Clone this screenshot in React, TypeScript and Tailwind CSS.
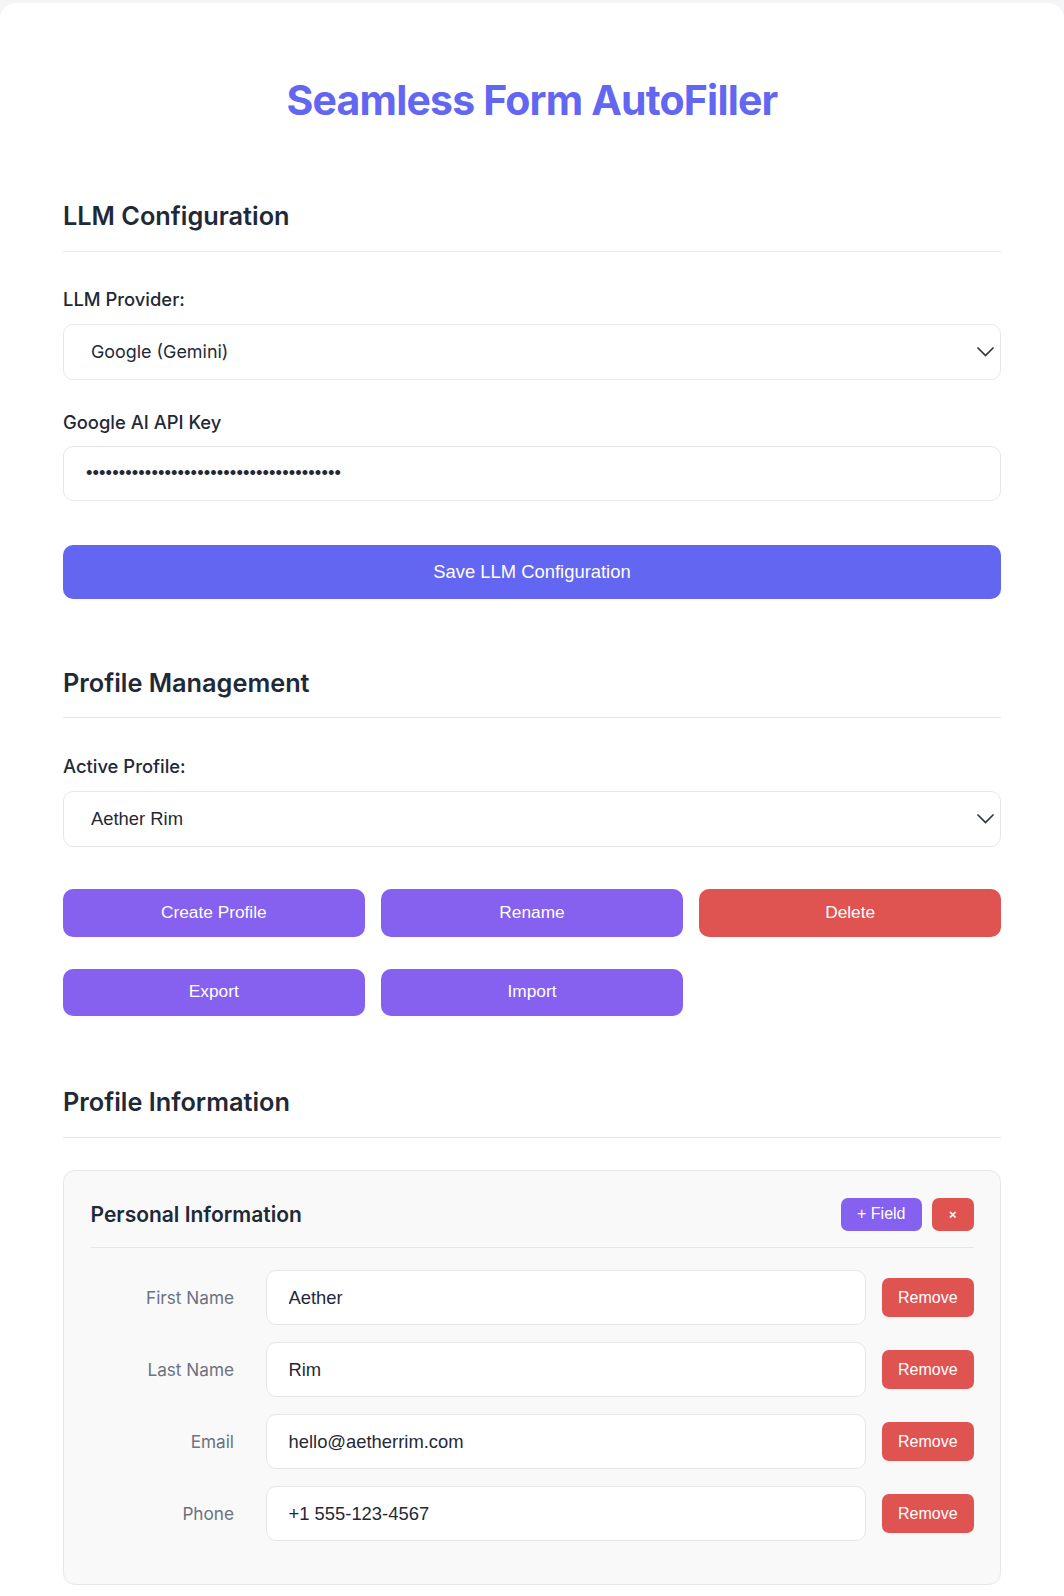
import React from "react";

const ui = "font-['Inter','Noto_Sans',sans-serif]";
const arial = "font-['Liberation_Sans',Arial,sans-serif]";

function SectionTitle({ children, className = "" }: { children: React.ReactNode; className?: string }) {
  return (
    <h2
      className={`${ui} text-[25.3px] leading-[32px] font-semibold text-[#1f2937] pb-[18.5px] border-b border-[#e5e7eb] ${className}`}
    >
      {children}
    </h2>
  );
}

function Label({ children, className = "" }: { children: React.ReactNode; className?: string }) {
  return (
    <label className={`${ui} block text-[18.4px] leading-[28px] font-medium text-[#1f2937] ${className}`}>
      {children}
    </label>
  );
}

function Chevron() {
  return (
    <svg
      className="pointer-events-none absolute right-[7px] top-1/2 -translate-y-1/2"
      width="17"
      height="10"
      viewBox="0 0 17 10"
      fill="none"
    >
      <path d="M1 1L8.5 8.5L16 1" stroke="#2f3542" strokeWidth="1.7" strokeLinecap="round" />
    </svg>
  );
}

function Select({ value, options, font, size }: { value: string; options: string[]; font: string; size: string }) {
  return (
    <div className="relative">
      <select
        defaultValue={value}
        className={`${font} ${size} appearance-none w-full h-[56px] pl-[27px] pr-10 bg-white border border-[#e5e7eb] rounded-[10px] text-[#1f2937] outline-none`}
      >
        {options.map((o) => (
          <option key={o}>{o}</option>
        ))}
      </select>
      <Chevron />
    </div>
  );
}

export default function App() {
  const fields = [
    { label: "First Name", value: "Aether" },
    { label: "Last Name", value: "Rim" },
    { label: "Email", value: "hello@aetherrim.com" },
    { label: "Phone", value: "+1 555-123-4567" },
  ];

  const purpleBtn = `${arial} h-[47.5px] rounded-[10px] bg-[#8660ee] text-white text-[17.3px]`;

  return (
    <div className="bg-[#f5f5f7] pt-[3px]">
      <div className="bg-white rounded-t-[16px] px-[63px] pt-[73px] pb-[9.5px]">
        {/* Header */}
        <h1 className={`${ui} text-center text-[41px] leading-[48px] font-bold text-[#6366f1] tracking-[-0.02em]`}>
          Seamless Form AutoFiller
        </h1>

        {/* LLM configuration */}
        <SectionTitle className="mt-[76px]">LLM Configuration</SectionTitle>
        <Label className="mt-[33.5px] mb-[11px]">LLM Provider:</Label>
        <Select
          value="Google (Gemini)"
          options={["Google (Gemini)", "OpenAI", "Anthropic"]}
          font={ui}
          size="text-[17.9px]"
        />

        <Label className="mt-[28px] mb-[9.5px]">Google AI API Key</Label>
        <input
          type="password"
          readOnly
          value="AIzaSyD3x9kQm2Lp7Vt5Rw8Yb1Nc4Hf6Jg0Zs2u"
          className={`${arial} block w-full h-[55px] pl-[22px] bg-white border border-[#e5e7eb] rounded-[10px] text-[18.4px] tracking-[0.1px] text-[#1f2937] outline-none`}
        />

        <button className={`${arial} mt-[44px] w-full h-[54px] rounded-[10px] bg-[#6366f1] text-white text-[18.4px]`}>
          Save LLM Configuration
        </button>

        {/* Profile management */}
        <SectionTitle className="mt-[68px]">Profile Management</SectionTitle>
        <Label className="mt-[33.5px] mb-[11px]">Active Profile:</Label>
        <Select value="Aether Rim" options={["Aether Rim"]} font={arial} size="text-[18.4px]" />

        <div className="mt-[42.5px] grid grid-cols-3 gap-x-[16.5px] gap-y-[32px]">
          <button className={purpleBtn}>Create Profile</button>
          <button className={purpleBtn}>Rename</button>
          <button className={`${arial} h-[47.5px] rounded-[10px] bg-[#df5450] text-white text-[17.3px]`}>Delete</button>
          <button className={purpleBtn}>Export</button>
          <button className={purpleBtn}>Import</button>
        </div>

        {/* Profile information */}
        <SectionTitle className="mt-[70px]">Profile Information</SectionTitle>

        <div className="mt-[32.5px] bg-[#f9f9f9] border border-[#e5e7eb] rounded-[12px] p-[26.5px]">
          <div className="flex items-center justify-between pb-[15.5px] border-b border-[#e5e7eb]">
            <h3 className={`${ui} text-[21px] font-semibold text-[#1f2937]`}>Personal Information</h3>
            <div className="flex gap-[10.5px]">
              <button className={`${arial} h-[33.5px] w-[80.5px] rounded-[7px] bg-[#8660ee] text-white text-[16px]`}>
                + Field
              </button>
              <button className={`${arial} h-[33.5px] w-[41.5px] rounded-[7px] bg-[#df5450] text-white text-[13px] font-bold`}>
                ×
              </button>
            </div>
          </div>

          <div className="mt-[22.5px] flex flex-col gap-[17px] mb-[16.5px]">
            {fields.map((f) => (
              <div key={f.label} className="flex items-center">
                <span className={`${ui} w-[143.5px] text-right text-[17.2px] text-[#6b7280]`}>{f.label}</span>
                <input
                  readOnly
                  value={f.value}
                  className={`${arial} ml-[31.5px] flex-1 h-[55px] pl-[22px] bg-white border border-[#e5e7eb] rounded-[10px] text-[18.4px] text-[#1f2937] outline-none`}
                />
                <button className={`${arial} ml-[16.5px] w-[91.5px] h-[39px] rounded-[7px] bg-[#df5450] text-white text-[16px]`}>
                  Remove
                </button>
              </div>
            ))}
          </div>
        </div>
      </div>
    </div>
  );
}
